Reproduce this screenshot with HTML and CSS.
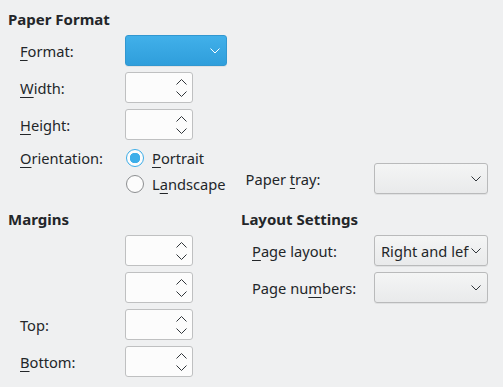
FILE: index.html
```html
<!DOCTYPE html>
<html lang="en">
<head>
    <meta charset="UTF-8">
    <title>Page Style</title>
    <link rel="stylesheet" href="styles.css">
</head>
<body>

<div class="page">
    <h2>Paper Format</h2>
    <div class="form paper">
        <label class="lbl"><u>F</u>ormat:</label>
        <div class="combo blue"><span class="val"></span><svg class="arrow" width="10" height="6" viewBox="0 0 10 6"><polyline points="0.5,0.5 5,5 9.5,0.5"/></svg></div>

        <label class="lbl"><u>W</u>idth:</label>
        <div class="spin"><svg width="11" height="18" viewBox="0 0 11 18"><polyline points="0.5,5.5 5.5,0.5 10.5,5.5"/><polyline points="0.5,12.5 5.5,17.5 10.5,12.5"/></svg></div>

        <label class="lbl"><u>H</u>eight:</label>
        <div class="spin"><svg width="11" height="18" viewBox="0 0 11 18"><polyline points="0.5,5.5 5.5,0.5 10.5,5.5"/><polyline points="0.5,12.5 5.5,17.5 10.5,12.5"/></svg></div>

        <label class="lbl orient"><u>O</u>rientation:</label>
        <div class="orient-row">
            <div class="radios">
                <div class="radio on"><span class="dot"></span><u>P</u>ortrait</div>
                <div class="radio"><span class="dot"></span>L<u>a</u>ndscape</div>
            </div>
            <div class="tray">
                <label class="lbl">Paper <u>t</u>ray:</label>
                <div class="combo wide"><span class="val"></span><svg class="arrow" width="10" height="6" viewBox="0 0 10 6"><polyline points="0.5,0.5 5,5 9.5,0.5"/></svg></div>
            </div>
        </div>
    </div>

    <div class="bottom">
        <div class="col">
            <h2>Margins</h2>
            <div class="form margins">
                <label class="lbl"></label>
                <div class="spin"><svg width="11" height="18" viewBox="0 0 11 18"><polyline points="0.5,5.5 5.5,0.5 10.5,5.5"/><polyline points="0.5,12.5 5.5,17.5 10.5,12.5"/></svg></div>
                <label class="lbl"></label>
                <div class="spin"><svg width="11" height="18" viewBox="0 0 11 18"><polyline points="0.5,5.5 5.5,0.5 10.5,5.5"/><polyline points="0.5,12.5 5.5,17.5 10.5,12.5"/></svg></div>
                <label class="lbl">Top:</label>
                <div class="spin"><svg width="11" height="18" viewBox="0 0 11 18"><polyline points="0.5,5.5 5.5,0.5 10.5,5.5"/><polyline points="0.5,12.5 5.5,17.5 10.5,12.5"/></svg></div>
                <label class="lbl"><u>B</u>ottom:</label>
                <div class="spin"><svg width="11" height="18" viewBox="0 0 11 18"><polyline points="0.5,5.5 5.5,0.5 10.5,5.5"/><polyline points="0.5,12.5 5.5,17.5 10.5,12.5"/></svg></div>
            </div>
        </div>
        <div class="col">
            <h2>Layout Settings</h2>
            <div class="form layout">
                <label class="lbl"><u>P</u>age layout:</label>
                <div class="combo wide"><span class="val">Right and left</span><svg class="arrow" width="10" height="6" viewBox="0 0 10 6"><polyline points="0.5,0.5 5,5 9.5,0.5"/></svg></div>
                <label class="lbl">Page nu<u>m</u>bers:</label>
                <div class="combo wide"><span class="val"></span><svg class="arrow" width="10" height="6" viewBox="0 0 10 6"><polyline points="0.5,0.5 5,5 9.5,0.5"/></svg></div>
            </div>
        </div>
    </div>
</div>

</body>
</html>
```

FILE: styles.css
```css
body {
    margin: 0;
    background-color: #eff0f1;
    color: #232629;
    font-family: "Noto Sans", sans-serif;
    font-size: 14.67px;
    line-height: 20px;
}
.page {
    padding: 9px 0 0 8px;
}
h2 {
    font-size: 15px;
    font-weight: bold;
    margin: 0;
    height: 20px;
}
u {
    text-decoration-thickness: 1px;
    text-underline-offset: 3px;
}
.form {
    display: grid;
    grid-template-columns: 105px auto;
    row-gap: 6px;
    align-items: center;
    padding-left: 12px;
}
.paper {
    margin-top: 6px;
}
.lbl {
    display: block;
    white-space: nowrap;
}
.lbl.orient {
    align-self: start;
    margin-top: 2px;
}
.spin {
    width: 61px;
    height: 29px;
    background: #fcfcfc;
    border: 1px solid #bfc0c1;
    border-radius: 3px;
    display: flex;
    align-items: center;
    justify-content: flex-end;
    padding-right: 5px;
}
.spin svg polyline, .combo svg polyline {
    fill: none;
    stroke: #31363b;
    stroke-width: 1;
}
.combo {
    height: 29px;
    border: 1px solid #b9babb;
    border-radius: 3px;
    background: linear-gradient(#f4f5f5, #e9eaeb);
    box-shadow: 0 1px 0 rgba(0, 0, 0, 0.06);
    display: flex;
    align-items: center;
    padding: 0 6px 0 6px;
}
.combo .val {
    flex: 1;
    overflow: hidden;
    white-space: nowrap;
    margin-right: 2px;
}
.combo.blue {
    width: 88px;
    background: linear-gradient(#41b0ea, #2f9edb);
    border-color: #3197d0;
}
.combo.blue svg polyline {
    stroke: #ffffff;
}
.combo.wide {
    width: 100px;
}
.orient-row {
    display: flex;
    align-items: flex-end;
}
.radios {
    display: flex;
    flex-direction: column;
    gap: 6px;
    padding-top: 2px;
}
.radio {
    display: flex;
    align-items: center;
    height: 20px;
}
.radio .dot {
    width: 16px;
    height: 16px;
    border: 1px solid #8c8e90;
    border-radius: 50%;
    background: #fcfcfc;
    margin: 0 8px 0 1px;
}
.radio.on .dot {
    border-color: #3daee9;
    background: radial-gradient(circle, #3daee9 0 5px, #fcfcfc 5.5px);
}
.tray {
    display: flex;
    align-items: center;
    margin-left: 20px;
}
.tray .lbl {
    width: 128px;
}
.bottom {
    display: grid;
    grid-template-columns: 233px auto;
    margin-top: 15px;
}
.bottom h2 {
    margin-bottom: 6px;
}
.layout {
    grid-template-columns: 122px auto;
    padding-left: 11px;
}
```
